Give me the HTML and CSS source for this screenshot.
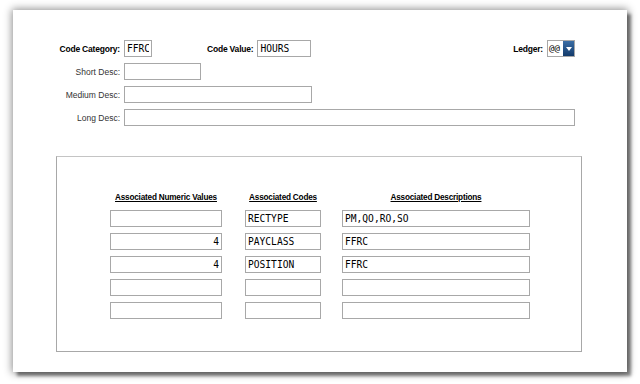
FILE: index.html
```html
<!DOCTYPE html>
<html lang="en">
<head>
    <meta charset="UTF-8">
    <title>Code Maintenance</title>
    <link rel="stylesheet" href="styles.css">
</head>
<body>

    <div class="page">

        <!-- Code header -->
        <div class="row">
            <span class="label strong">Code Category:</span>
            <input class="field w-cat" type="text" value="FFRC">
            <span class="label-inline strong">Code Value:</span>
            <input class="field w-val" type="text" value="HOURS">
            <span class="label-inline strong ledger">Ledger:</span>
            <div class="select">
                <span class="select-value">@@</span>
                <span class="select-arrow"></span>
            </div>
        </div>
        <div class="row">
            <span class="label">Short Desc:</span>
            <input class="field w-short" type="text">
        </div>
        <div class="row">
            <span class="label">Medium Desc:</span>
            <input class="field w-medium" type="text">
        </div>
        <div class="row">
            <span class="label">Long Desc:</span>
            <input class="field w-long" type="text">
        </div>

        <!-- Associations -->
        <div class="assoc">
            <div class="assoc-grid">
                <div class="head"><span>Associated Numeric Values</span></div>
                <div class="head head-codes"><span>Associated Codes</span></div>
                <div class="head head-desc"><span>Associated Descriptions</span></div>

                <input class="field num" type="text" value="">
                <input class="field code" type="text" value="RECTYPE">
                <input class="field desc" type="text" value="PM,QO,RO,SO">

                <input class="field num" type="text" value="4">
                <input class="field code" type="text" value="PAYCLASS">
                <input class="field desc" type="text" value="FFRC">

                <input class="field num" type="text" value="4">
                <input class="field code" type="text" value="POSITION">
                <input class="field desc" type="text" value="FFRC">

                <input class="field num" type="text" value="">
                <input class="field code" type="text" value="">
                <input class="field desc" type="text" value="">

                <input class="field num" type="text" value="">
                <input class="field code" type="text" value="">
                <input class="field desc" type="text" value="">
            </div>
        </div>

    </div>

</body>
</html>
```

FILE: styles.css
```css
/* General styling */
body {
    margin: 0;
    padding: 0;
    background-color: #fff;
    font-family: "Liberation Sans", Arial, sans-serif;
    color: #000;
}

/* Page panel with drop shadow */
.page {
    margin: 10px 13px;
    width: 614px;
    height: 362px;
    box-sizing: border-box;
    background-color: #fff;
    padding: 30px 52px 0 0;
    box-shadow: 0 0 8px 1px rgba(0, 0, 0, 0.45), 4px 4px 3px rgba(0, 0, 0, 0.45);
}

/* Form rows */
.row {
    display: flex;
    align-items: center;
    height: 17px;
    margin-bottom: 6px;
}

.label {
    width: 107px;
    margin-right: 4px;
    text-align: right;
    font-size: 8.5px;
    color: #333;
    white-space: nowrap;
}

.strong {
    font-weight: bold;
    color: #000;
    letter-spacing: -0.2px;
}

.label-inline {
    font-size: 8.5px;
    margin-left: 55px;
    margin-right: 4px;
    white-space: nowrap;
}

.ledger {
    margin-left: auto;
}

/* Inputs */
.field {
    height: 17px;
    box-sizing: border-box;
    border: 1px solid #a8a8a8;
    padding: 0 2px;
    margin: 0;
    font-family: "DejaVu Sans Mono", monospace;
    font-size: 9.6px;
    color: #000;
    background-color: #fff;
    outline: none;
}

.w-cat { width: 28px; }
.w-val { width: 54px; }
.w-short { width: 77px; }
.w-medium { width: 188px; }
.w-long { width: 451px; }

/* Ledger dropdown */
.select {
    display: flex;
    width: 28px;
    height: 17px;
    box-sizing: border-box;
    border: 1px solid #a8a8a8;
    background-color: #fff;
}

.select-value {
    flex: 1;
    font-family: "DejaVu Sans Mono", monospace;
    font-size: 9px;
    line-height: 15px;
    padding-left: 1px;
    overflow: hidden;
}

.select-arrow {
    width: 11px;
    background: linear-gradient(#3a6ea5, #133a6b);
    display: flex;
    align-items: center;
    justify-content: center;
}

.select-arrow::after {
    content: "";
    border-left: 3px solid transparent;
    border-right: 3px solid transparent;
    border-top: 4px solid #fff;
}

/* Associations box */
.assoc {
    margin: 30px 0 0 43px;
    width: 526px;
    height: 196px;
    box-sizing: border-box;
    border: 1px solid #a8a8a8;
    border-top-color: #c4c4c4;
    padding: 36px 0 0 53px;
}

.assoc-grid {
    display: grid;
    grid-template-columns: 135px 97px 188px;
    grid-template-rows: 11px;
    grid-auto-rows: 17px;
    row-gap: 6px;
}

.head {
    font-size: 8.2px;
    font-weight: bold;
    letter-spacing: -0.2px;
    text-decoration: underline;
    width: 112px;
    text-align: center;
    height: 11px;
    white-space: nowrap;
}

.head-codes { width: 76px; }
.head-desc { width: 188px; }

.num {
    width: 112px;
    text-align: right;
}

.code { width: 76px; }
.desc { width: 188px; }
```
